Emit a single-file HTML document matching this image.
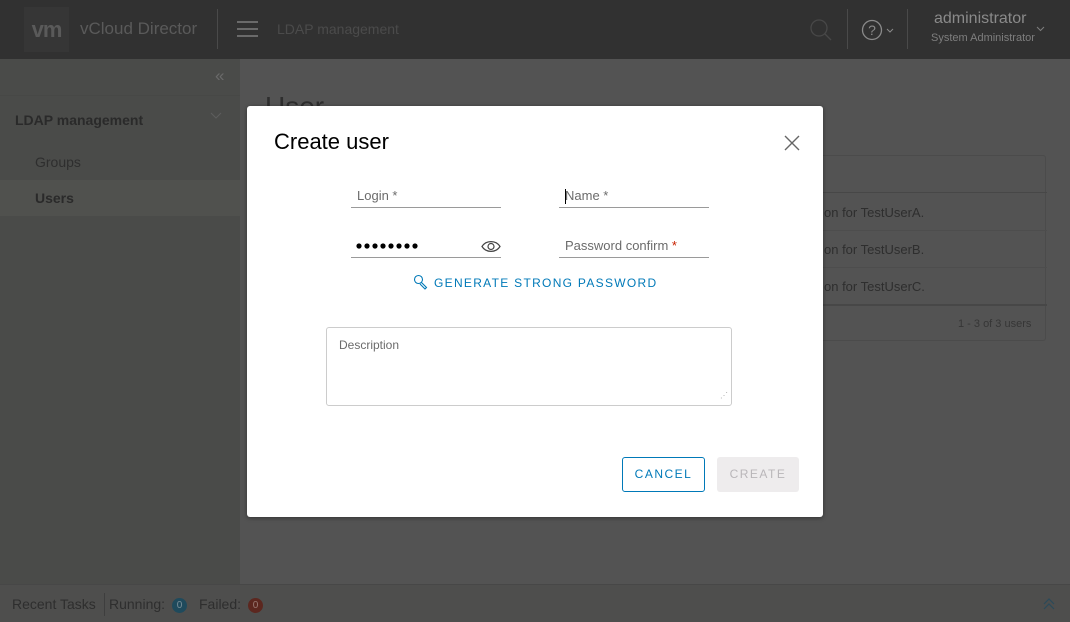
<!DOCTYPE html>
<html><head><meta charset="utf-8"><style>
*{margin:0;padding:0;box-sizing:border-box}
body{width:1070px;height:622px;overflow:hidden;position:relative;font-family:"Liberation Sans",sans-serif;background:#535353}
.hdr{position:absolute;left:0;top:0;width:1070px;height:59px;background:#313131}
.logo{position:absolute;left:24px;top:7px;width:45px;height:45px;background:#363636;color:#5a5a5a;font-weight:bold;font-size:22px;text-align:center;line-height:45px;letter-spacing:-1px}
.t{position:absolute;white-space:nowrap}
.side{position:absolute;left:0;top:59px;width:240px;height:525px;background:#4a4b49}
.main{position:absolute;left:240px;top:59px;width:830px;height:525px;background:#535353}
.bot{position:absolute;left:0;top:584px;width:1070px;height:38px;background:#4e4e4d;border-top:1px solid #474747}
.modal{position:absolute;left:247px;top:106px;width:576px;height:411px;background:#fff;border-radius:3px;box-shadow:0 1px 4px rgba(0,0,0,.4)}
.f{position:absolute;border-bottom:1px solid #9a9a9a;height:1px}
.lbl{position:absolute;font-size:13px;color:#6b6b6b;white-space:nowrap}
</style></head><body>
<div class="hdr">
<div class="logo">vm</div>
<div class="t" style="left:80px;top:19px;font-size:17px;color:#5a5a5a">vCloud Director</div>
<div style="position:absolute;left:217px;top:9px;width:1px;height:40px;background:#4a4a4a"></div>
<div style="position:absolute;left:237px;top:21px;width:21px;height:2px;background:#6a6a6a;box-shadow:0 7px 0 #6a6a6a,0 14px 0 #6a6a6a"></div>
<div class="t" style="left:277px;top:21px;font-size:14px;color:#4b4b4b">LDAP management</div>
<svg style="position:absolute;left:810px;top:19px" width="22" height="22"><circle cx="9" cy="9" r="8" fill="none" stroke="#484848" stroke-width="1.3"/><line x1="15" y1="15" x2="21" y2="21" stroke="#484848" stroke-width="1.3"/></svg>
<div style="position:absolute;left:847px;top:9px;width:1px;height:40px;background:#4a4a4a"></div>
<svg style="position:absolute;left:861px;top:19px" width="36" height="22"><circle cx="11" cy="11" r="9.5" fill="none" stroke="#8a8a8a" stroke-width="1.3"/><text x="11" y="16" font-size="14" fill="#8a8a8a" text-anchor="middle" font-family="Liberation Sans">?</text><path d="M26 10l3 3 3-3" fill="none" stroke="#8a8a8a" stroke-width="1"/></svg>
<div style="position:absolute;left:907px;top:9px;width:1px;height:40px;background:#4a4a4a"></div>
<div class="t" style="left:934px;top:10px;font-size:16px;color:#8a8a8a">administrator</div>
<div class="t" style="left:931px;top:32px;font-size:11px;color:#7e7e7e">System Administrator</div>
<svg style="position:absolute;left:1036px;top:25px" width="10" height="8"><path d="M1 2l3.5 3.5L8 2" fill="none" stroke="#7e7e7e"/></svg>
</div>
<div class="side">
<div class="t" style="left:215px;top:7px;font-size:17px;color:#6a6a6a">«</div>
<div style="position:absolute;left:0;top:36px;width:240px;height:1px;background:#474846"></div>
<div class="t" style="left:15px;top:53px;font-size:14px;font-weight:bold;color:#2a2a2a">LDAP management</div>
<svg style="position:absolute;left:210px;top:53px" width="12" height="8"><path d="M1 1l5 5 5-5" fill="none" stroke="#5e5e5e"/></svg>
<div class="t" style="left:35px;top:95px;font-size:14px;color:#2e2e2e">Groups</div>
<div style="position:absolute;left:0;top:121px;width:240px;height:36px;background:#50514e"></div>
<div class="t" style="left:35px;top:131px;font-size:14px;font-weight:bold;color:#2a2a2a">Users</div>
</div>
<div class="main">
<div class="t" style="left:25px;top:32px;font-size:28px;color:#2e2e2e">User</div>
<div style="position:absolute;left:560px;top:96px;width:246px;height:186px;border:1px solid #4b4b4b;border-radius:3px">
<div style="position:absolute;left:0;top:36px;width:246px;height:1px;background:#474747"></div>
<div style="position:absolute;left:0;top:74px;width:246px;height:1px;background:#4d4d4d"></div>
<div style="position:absolute;left:0;top:111px;width:246px;height:1px;background:#4d4d4d"></div>
<div style="position:absolute;left:0;top:148px;width:246px;height:2px;background:#474747"></div>
<div class="t" style="left:23px;top:49px;font-size:13px;color:#2e2e2e">on for TestUserA.</div>
<div class="t" style="left:23px;top:86px;font-size:13px;color:#2e2e2e">on for TestUserB.</div>
<div class="t" style="left:23px;top:123px;font-size:13px;color:#2e2e2e">on for TestUserC.</div>
<div class="t" style="left:157px;top:162px;font-size:11px;color:#363636">1 - 3 of 3 users</div>
</div>
</div>
<div class="bot">
<div class="t" style="left:12px;top:11px;font-size:14px;color:#2e2e2e">Recent Tasks</div>
<div style="position:absolute;left:104px;top:8px;width:1px;height:23px;background:#3e3e3e"></div>
<div class="t" style="left:109px;top:11px;font-size:14px;color:#2e2e2e">Running:</div>
<div style="position:absolute;left:172px;top:13px;width:15px;height:15px;border-radius:50%;background:#1f4a5c;color:#7a8f99;font-size:10px;text-align:center;line-height:15px">0</div>
<div class="t" style="left:199px;top:11px;font-size:14px;color:#2e2e2e">Failed:</div>
<div style="position:absolute;left:248px;top:13px;width:15px;height:15px;border-radius:50%;background:#5c271f;color:#9a7a73;font-size:10px;text-align:center;line-height:15px">0</div>
<svg style="position:absolute;left:1043px;top:13px" width="12" height="12"><path d="M1 6l5-5 5 5M1 11l5-5 5 5" fill="none" stroke="#2a4a5a" stroke-width="1.2"/></svg>
</div>
<div class="modal">
<div class="t" style="left:27px;top:23px;font-size:22px;color:#000">Create user</div>
<svg style="position:absolute;left:537px;top:29px" width="16" height="16"><path d="M1 1l14 14M15 1L1 15" stroke="#666" stroke-width="1.4"/></svg>
<div class="lbl" style="left:110px;top:82px">Login *</div>
<div class="f" style="left:104px;top:101px;width:150px"></div>
<div style="position:absolute;left:318px;top:83px;width:1px;height:15px;background:#000"></div>
<div class="lbl" style="left:318px;top:82px">Name *</div>
<div class="f" style="left:312px;top:101px;width:150px"></div>
<svg style="position:absolute;left:109px;top:136px" width="70" height="8"><g fill="#000"><circle cx="3" cy="4" r="2.6"/><circle cx="11" cy="4" r="2.6"/><circle cx="19" cy="4" r="2.6"/><circle cx="27" cy="4" r="2.6"/><circle cx="35" cy="4" r="2.6"/><circle cx="43" cy="4" r="2.6"/><circle cx="51" cy="4" r="2.6"/><circle cx="59" cy="4" r="2.6"/></g></svg>
<svg style="position:absolute;left:234px;top:134px" width="20" height="13"><path d="M1 6.5C5 0 15 0 19 6.5 15 13 5 13 1 6.5z" fill="none" stroke="#444" stroke-width="1.2"/><circle cx="10" cy="6.5" r="3" fill="none" stroke="#444" stroke-width="1.2"/></svg>
<div class="f" style="left:104px;top:151px;width:150px"></div>
<div class="lbl" style="left:318px;top:132px">Password confirm <span style="color:#c92100">*</span></div>
<div class="f" style="left:312px;top:151px;width:150px"></div>
<svg style="position:absolute;left:166px;top:168px" width="16" height="16"><circle cx="5.5" cy="5.5" r="4" fill="none" stroke="#0079b8" stroke-width="1.1"/><path d="M8.5 8.5l5 5-1.5 1.5-5-5" fill="none" stroke="#0079b8" stroke-width="1.1"/></svg>
<div class="t" style="left:187px;top:170px;font-size:12px;color:#0079b8;letter-spacing:1.3px">GENERATE STRONG PASSWORD</div>
<div style="position:absolute;left:79px;top:221px;width:406px;height:79px;border:1px solid #ccc;border-radius:3px"></div>
<div class="lbl" style="left:92px;top:232px;font-size:12px">Description</div>
<div class="t" style="left:473px;top:285px;font-size:8px;color:#aaa">⋰</div>
<div style="position:absolute;left:375px;top:351px;width:83px;height:35px;border:1px solid #0079b8;border-radius:3px;color:#0079b8;font-size:12px;letter-spacing:1.5px;text-align:center;line-height:33px">CANCEL</div>
<div style="position:absolute;left:470px;top:351px;width:82px;height:35px;background:#eeeced;border-radius:3px;color:#b9b6b9;font-size:12px;letter-spacing:1.5px;text-align:center;line-height:35px">CREATE</div>
</div>
</body></html>
